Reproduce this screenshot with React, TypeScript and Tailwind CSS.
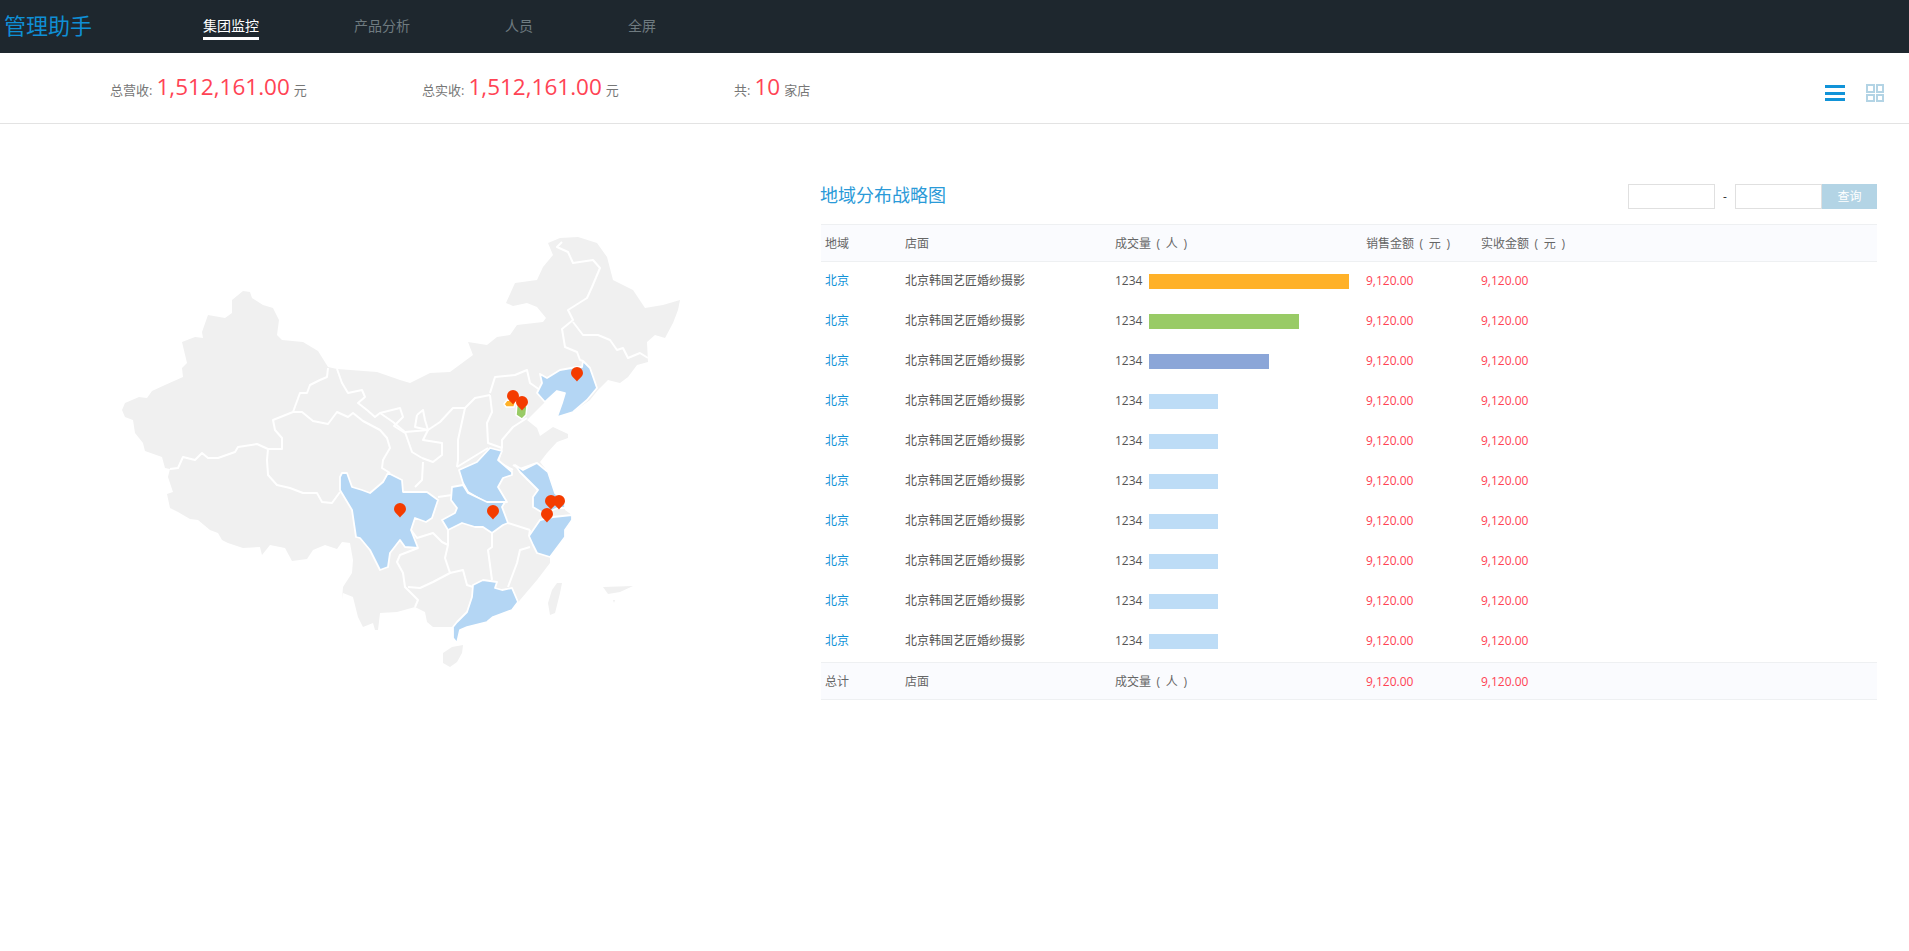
const font = { fontFamily: '"Open Sans", "Noto Sans CJK SC", sans-serif' };

const outline =
  "243,291 250,292 252,298 263,305 273,308 279,320 277,335 282,340 303,342 318,351 328,367 337,369 377,372 400,380 410,383 430,373 450,372 473,355 468,342 487,345 497,337 510,335 517,325 543,322 546,318 537,307 527,303 513,306 506,303 515,283 537,280 543,267 553,255 548,243 560,238 578,237 597,243 607,257 613,280 633,290 645,308 663,305 680,300 678,310 673,323 665,338 655,335 647,342 648,362 637,365 628,377 620,383 608,380 598,390 590,400 573,412 557,417 562,403 565,393 557,391 545,402 530,417 527,420 537,428 540,436 553,427 568,434 568,438 557,442 547,453 540,462 548,472 555,493 565,502 565,510 572,515 572,520 565,530 565,537 550,557 550,563 537,580 520,600 518,603 512,610 493,617 487,622 467,627 460,630 457,643 453,638 453,627 433,627 427,622 425,612 415,607 397,612 380,613 378,630 375,630 373,623 363,627 358,617 353,597 343,593 342,600 343,587 352,573 353,560 350,543 342,542 337,549 325,545 313,550 307,559 292,561 285,548 270,545 262,555 260,547 243,548 228,543 222,540 218,533 210,530 198,520 190,519 178,512 170,508 167,494 173,492 168,477 170,469 165,468 162,457 145,451 143,443 135,433 133,420 125,417 122,410 125,403 139,397 147,398 152,391 165,385 183,377 182,368 187,363 182,342 195,337 203,338 202,332 208,315 225,318 232,313 232,300";

const islands = [
  "443,653 452,647 463,645 462,653 457,662 450,667 443,663",
  "557,583 562,583 560,593 555,613 550,615 548,603 552,590",
  "603,587 633,586 620,592 608,594",
  "613,600 615,600 614,603",
];

const borders = [
  "170,469 178,468 183,457 195,460 202,453 208,458 218,458 235,452 238,447 257,444 268,449",
  "268,449 282,449 282,438 275,430 273,420 293,412",
  "293,412 300,393 307,393 310,385 320,380 327,377 328,368",
  "337,369 342,383 348,393 362,390 365,397 358,403 367,410 375,417 380,413 400,408 403,417 394,426 405,433",
  "293,412 302,412 313,421 328,424 337,412 348,417 353,413 363,421 380,430 387,438 390,448 383,460 382,468 390,473",
  "268,449 267,460 268,475 277,485 290,488 303,493 317,493 322,502 332,503 340,492",
  "490,393 495,377 515,375 527,370 530,383 540,390",
  "490,395 475,398 465,408 453,408 440,422 428,430 405,432",
  "380,413 393,422 405,432 412,452 422,458",
  "417,415 423,410 425,420 428,430 423,440 442,443 442,455 433,462 422,458",
  "417,415 415,427 428,430",
  "465,408 458,440 458,460 457,467",
  "423,462 422,480 415,487",
  "438,497 452,495",
  "490,395 492,412 487,423 488,443 502,448",
  "502,448 502,440 513,427 527,418",
  "457,467 488,448",
  "502,448 498,462 513,470",
  "513,465 520,469 537,463",
  "508,523 530,530",
  "492,533 492,547 488,550 492,580",
  "530,547 520,550 517,563 508,587",
  "448,530 448,545 445,558 450,573 463,570 467,585 473,587",
  "450,573 433,582 420,588 408,587",
  "411,530 417,538 433,533 442,542 448,545",
  "418,548 400,555 397,562 403,573 405,587 408,590 418,600 415,607",
  "562,242 557,247 568,252 573,263 593,260 600,268 592,287 587,298 568,310 573,320 562,329 565,347 577,352 580,360 583,361",
  "573,322 583,335 598,335 610,340 617,350 623,348 628,358 640,353 648,358",
  "530,530 529,536",
  "538,490 528,480 520,472",
];

const blue = [
  "340,477 342,473 347,473 352,487 362,490 370,493 383,482 388,473 402,480 403,492 427,492 438,500 432,518 426,522 415,518 411,530 418,548 405,547 400,540 390,553 388,567 380,570 370,550 360,538 356,537 352,510 340,490",
  "490,448 502,451 498,460 512,472 512,475 503,478 498,487 507,502 487,503 468,492 463,483 459,470 477,462",
  "452,487 463,485 468,493 487,502 505,502 502,507 508,523 503,525 492,533 483,527 475,527 462,523 448,530 442,520 455,513 457,508 451,500",
  "515,465 523,470 537,463 548,472 555,493 565,502 565,508 558,508 553,510 543,513 533,507 533,497 538,490 528,480 520,472",
  "553,517 572,515 572,520 565,530 565,537 550,557 537,553 533,545 529,536 540,520",
  "473,585 483,580 497,582 495,588 502,590 512,588 518,602 512,610 493,617 487,622 467,627 460,630 457,643 453,638 453,627 457,622 467,612 472,597",
  "537,393 542,383 540,374 547,378 560,370 577,367 582,367 583,361 590,368 597,388 587,400 573,412 557,417 562,403 565,393 557,391 545,402",
];

const pins = [
  [577, 373],
  [513, 396],
  [522, 402],
  [400, 509],
  [493, 511],
  [551, 501],
  [559, 501],
  [547, 514],
];

function ChinaMap() {
  return (
    <svg width="821" height="600" viewBox="0 124 821 600" className="block">
      <polygon points={outline} fill="#f0f0f0" />
      {islands.map((p) => (
        <polygon key={p} points={p} fill="#f0f0f0" />
      ))}
      {borders.map((p) => (
        <polyline key={p} points={p} fill="none" stroke="#fff" strokeWidth="2" strokeLinejoin="round" />
      ))}
      {blue.map((p) => (
        <polygon key={p} points={p} fill="#b4d6f4" stroke="#fff" strokeWidth="1.8" strokeLinejoin="round" />
      ))}
      <polygon points="504,404 507,400 516,401 514,407 506,407" fill="#ffb128" stroke="#fff" strokeWidth="1.5" />
      <polygon points="517,404 527,406 526,415 522,419 516,415" fill="#99cb66" stroke="#fff" strokeWidth="1.5" />
      {pins.map(([x, y]) => (
        <path
          key={`${x}-${y}`}
          d={`M${x} ${y + 8.5} C${x - 2} ${y + 5.5} ${x - 6} ${y + 3.5} ${x - 6} ${y} A6 6 0 1 1 ${x + 6} ${y} C${x + 6} ${y + 3.5} ${x + 2} ${y + 5.5} ${x} ${y + 8.5} Z`}
          fill="#f43c00"
        />
      ))}
    </svg>
  );
}

function Stat({ label, value, unit }: { label: string; value: string; unit: string }) {
  return (
    <div className="w-[312px] flex items-baseline text-[13px] text-[#777] mb-0.5">
      <span>{label}:</span>
      <span className="ml-1 text-[22.5px] text-[#ff4354]">{value}</span>
      <span className="ml-1">{unit}</span>
    </div>
  );
}

const bars = [
  { w: "w-[200px]", c: "bg-[#ffb128]" },
  { w: "w-[150px]", c: "bg-[#99cb66]" },
  { w: "w-[120px]", c: "bg-[#8ba6d8]" },
  { w: "w-[69px]", c: "bg-[#bddcf6]" },
  { w: "w-[69px]", c: "bg-[#bddcf6]" },
  { w: "w-[69px]", c: "bg-[#bddcf6]" },
  { w: "w-[69px]", c: "bg-[#bddcf6]" },
  { w: "w-[69px]", c: "bg-[#bddcf6]" },
  { w: "w-[69px]", c: "bg-[#bddcf6]" },
  { w: "w-[69px]", c: "bg-[#bddcf6]" },
];

export default function App() {
  return (
    <div className="min-h-[951px] bg-white" style={font}>
      <header className="h-[53px] bg-[#1e272e] flex items-start pl-1">
        <div className="w-[199px] text-[22px] leading-[33px] pt-[9px] text-[#0f8fd5]">管理助手</div>
        <nav className="flex items-start gap-[95px] pt-4 text-sm text-[#6f7b80]">
          <a className="h-6 text-white border-b-[3px] border-white">集团监控</a>
          <a>产品分析</a>
          <a>人员</a>
          <a>全屏</a>
        </nav>
      </header>

      <div className="h-[71px] border-b border-[#e3e3e3] flex items-center pl-[110px] pr-[25px]">
        <Stat label="总营收" value="1,512,161.00" unit="元" />
        <Stat label="总实收" value="1,512,161.00" unit="元" />
        <Stat label="共" value="10" unit="家店" />
        <div className="ml-auto flex items-center gap-[21px] pt-[10px]">
          <div className="w-5 flex flex-col gap-[3.5px]">
            <div className="h-[3px] bg-[#1193d8]"></div>
            <div className="h-[3px] bg-[#1193d8]"></div>
            <div className="h-[3px] bg-[#1193d8]"></div>
          </div>
          <div className="grid grid-cols-2 gap-px w-[18px] h-[18px]">
            <div className="border-2 border-[#b3d4e5]"></div>
            <div className="border-2 border-[#b3d4e5]"></div>
            <div className="border-2 border-[#b3d4e5]"></div>
            <div className="border-2 border-[#b3d4e5]"></div>
          </div>
        </div>
      </div>

      <main className="flex">
        <div className="w-[821px]">
          <ChinaMap />
        </div>
        <div className="w-[1056px] pt-[60px]">
          <div className="h-[25px] flex items-center">
            <h2 className="text-lg text-[#2a9ad8] mb-1 -ml-px">地域分布战略图</h2>
            <div className="ml-auto flex items-center text-xs text-[#333]">
              <div className="w-[87px] h-[25px] border border-[#e0e0e0]"></div>
              <span className="w-5 text-center">-</span>
              <div className="w-[87px] h-[25px] border border-[#e0e0e0]"></div>
              <button className="w-[55px] h-[25px] bg-[#b3d4e5] text-white">查询</button>
            </div>
          </div>

          <div className="mt-[15px] text-xs">
            <div className="h-[38px] pt-px flex items-center bg-[#fafbfe] border-y border-[#eef0f2] text-[#666] [word-spacing:2.5px]">
              <div className="w-[84px] pl-1">地域</div>
              <div className="w-[210px]">店面</div>
              <div className="w-[251px]">成交量 ( 人 )</div>
              <div className="w-[115px]">销售金额 ( 元 )</div>
              <div>实收金额 ( 元 )</div>
            </div>
            {bars.map((b, i) => (
              <div key={i} className="h-10 pb-[3px] flex items-center">
                <div className="w-[84px] pl-1 text-[#1193d8]">北京</div>
                <div className="w-[210px] text-[#555]">北京韩国艺匠婚纱摄影</div>
                <div className="w-[251px] flex items-center text-[#555]">
                  <span className="w-[34px]">1234</span>
                  <div className={`h-[15px] mt-0.5 ${b.w} ${b.c}`}></div>
                </div>
                <div className="w-[115px] text-[#ff4354]">9,120.00</div>
                <div className="text-[#ff4354]">9,120.00</div>
              </div>
            ))}
            <div className="h-[38px] pt-px flex items-center bg-[#fafbfe] border-y border-[#eef0f2] text-[#666] [word-spacing:2.5px]">
              <div className="w-[84px] pl-1">总计</div>
              <div className="w-[210px]">店面</div>
              <div className="w-[251px]">成交量 ( 人 )</div>
              <div className="w-[115px] text-[#ff4354]">9,120.00</div>
              <div className="text-[#ff4354]">9,120.00</div>
            </div>
          </div>
        </div>
      </main>
    </div>
  );
}
